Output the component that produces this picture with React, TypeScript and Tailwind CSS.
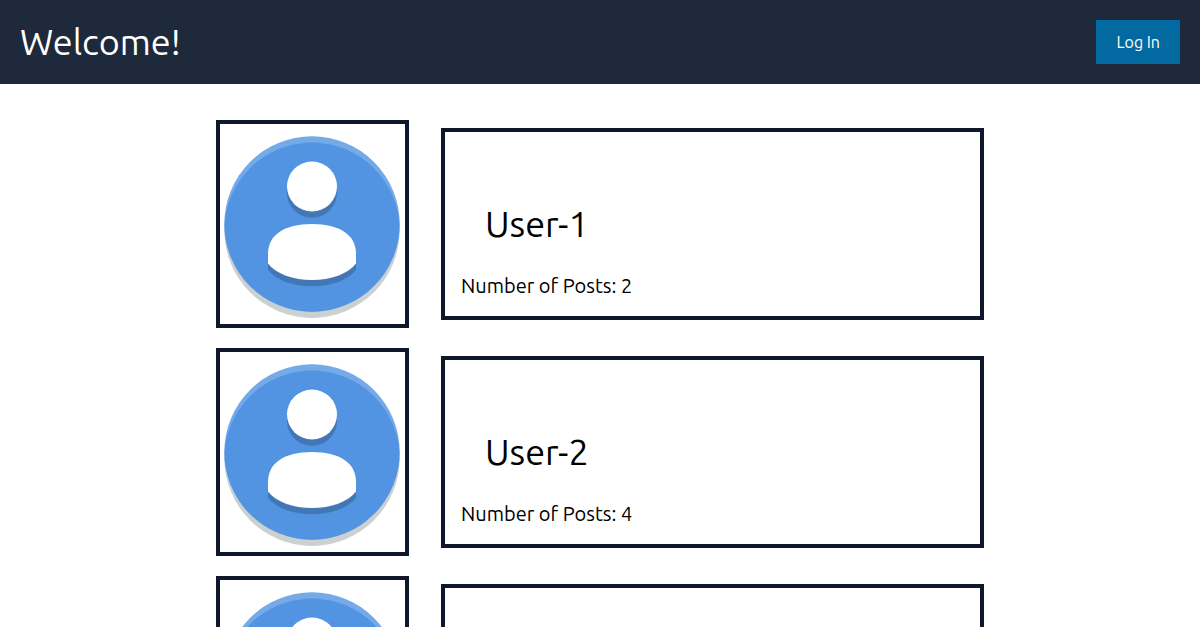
const users = [
  { name: "User-1", posts: 2 },
  { name: "User-2", posts: 4 },
  { name: "User-3", posts: 3 },
];

function Avatar({ id, label }: { id: string; label: string }) {
  return (
    <svg viewBox="0 0 185 200" className="block h-50 w-full" role="img" aria-label={label}>
      <defs>
        <clipPath id={id}>
          <circle cx="92" cy="100" r="87.7" />
        </clipPath>
      </defs>
      <circle cx="92" cy="106.2" r="87.7" fill="#cbd0d0" />
      <circle cx="92" cy="100" r="87.7" fill="#75aae8" />
      <circle cx="92" cy="106.2" r="87.7" fill="#5294e2" clipPath={`url(#${id})`} />
      <g fill="#4276b5" transform="translate(0 6.2)">
        <circle cx="92" cy="62.5" r="25" />
        <path d="M92 100C64 100 48 111 48 130V139.500C56 150 73 156 92 156S128 150 136 139.500V130C136 111 120 100 92 100Z" />
      </g>
      <g fill="#ffffff">
        <circle cx="92" cy="62.5" r="25" />
        <path d="M92 100C64 100 48 111 48 130V139.500C56 150 73 156 92 156S128 150 136 139.500V130C136 111 120 100 92 100Z" />
      </g>
    </svg>
  );
}

export default function App() {
  return (
    <div className="min-h-screen bg-white pb-9 font-['Ubuntu','Noto_Sans',sans-serif] text-black">
      <header className="flex items-center justify-between bg-[#1e293b] p-5 text-white">
        <h1 className="text-4xl">Welcome!</h1>
        <button type="button" className="bg-[#0369a1] px-5 py-2.5 text-base">
          Log In
        </button>
      </header>
      <main className="mx-auto flex max-w-3xl flex-col gap-5 pt-9">
        {users.map((user) => (
          <article key={user.name} className="flex items-center gap-8">
            <div className="w-[193px] shrink-0 border-4 border-[#0f172a]">
              <Avatar id={`avatar-${user.name}`} label={`${user.name} avatar`} />
            </div>
            <div className="flex h-48 flex-1 flex-col justify-end border-4 border-[#0f172a] p-4">
              <h2 className="px-6 pb-7 text-4xl">{user.name}</h2>
              <p className="text-xl">Number of Posts: {user.posts}</p>
            </div>
          </article>
        ))}
      </main>
    </div>
  );
}
